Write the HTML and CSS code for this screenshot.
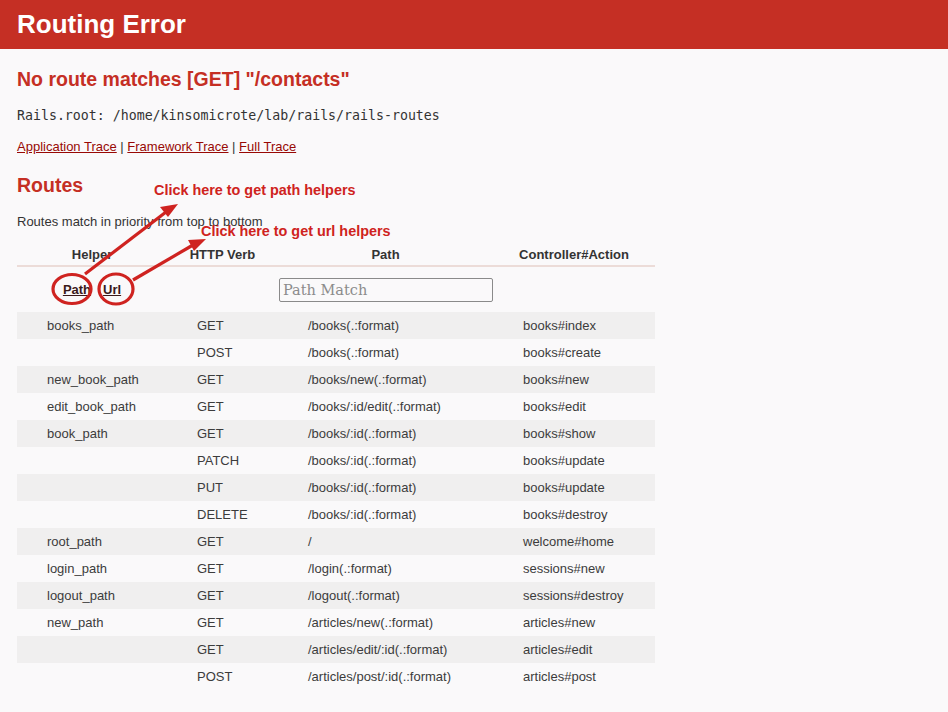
FILE: index.html
```html
<!DOCTYPE html>
<html>
<head>
<meta charset="utf-8">
<title>Routing Error</title>
<link rel="stylesheet" href="styles.css">
</head>
<body>
<header class="topbar"><h1>Routing Error</h1></header>
<main class="content">
  <h2 class="title">No route matches [GET] "/contacts"</h2>
  <p class="root">Rails.root: /home/kinsomicrote/lab/rails/rails-routes</p>
  <p class="traces"><a href="#">Application Trace</a> | <a href="#">Framework Trace</a> | <a href="#">Full Trace</a></p>
  <h2 class="routes-title">Routes</h2>
  <p class="note">Routes match in priority from top to bottom</p>
  <table class="route-table">
    <colgroup><col class="c1"><col class="c2"><col class="c3"><col class="c4"></colgroup>
    <thead>
      <tr class="head">
        <th>Helper</th><th>HTTP Verb</th><th>Path</th><th>Controller#Action</th>
      </tr>
      <tr class="filters">
        <th><span class="helper-links"><a href="#">Path</a><a href="#">Url</a></span></th>
        <th></th>
        <th><input class="search" type="text" placeholder="Path Match"></th>
        <th></th>
      </tr>
    </thead>
    <tbody>
      <tr><td>books_path</td><td>GET</td><td>/books(.:format)</td><td>books#index</td></tr>
      <tr><td></td><td>POST</td><td>/books(.:format)</td><td>books#create</td></tr>
      <tr><td>new_book_path</td><td>GET</td><td>/books/new(.:format)</td><td>books#new</td></tr>
      <tr><td>edit_book_path</td><td>GET</td><td>/books/:id/edit(.:format)</td><td>books#edit</td></tr>
      <tr><td>book_path</td><td>GET</td><td>/books/:id(.:format)</td><td>books#show</td></tr>
      <tr><td></td><td>PATCH</td><td>/books/:id(.:format)</td><td>books#update</td></tr>
      <tr><td></td><td>PUT</td><td>/books/:id(.:format)</td><td>books#update</td></tr>
      <tr><td></td><td>DELETE</td><td>/books/:id(.:format)</td><td>books#destroy</td></tr>
      <tr><td>root_path</td><td>GET</td><td>/</td><td>welcome#home</td></tr>
      <tr><td>login_path</td><td>GET</td><td>/login(.:format)</td><td>sessions#new</td></tr>
      <tr><td>logout_path</td><td>GET</td><td>/logout(.:format)</td><td>sessions#destroy</td></tr>
      <tr><td>new_path</td><td>GET</td><td>/articles/new(.:format)</td><td>articles#new</td></tr>
      <tr><td></td><td>GET</td><td>/articles/edit/:id(.:format)</td><td>articles#edit</td></tr>
      <tr><td></td><td>POST</td><td>/articles/post/:id(.:format)</td><td>articles#post</td></tr>
    </tbody>
  </table>
</main>

<svg class="annotations" width="948" height="712" viewBox="0 0 948 712">
  <ellipse cx="72" cy="289" rx="19" ry="14.5" fill="none" stroke="#cf2320" stroke-width="3.2"/>
  <ellipse cx="116" cy="289" rx="17" ry="15" fill="none" stroke="#cf2320" stroke-width="3.2"/>
  <line x1="85" y1="274" x2="166" y2="212" stroke="#cf2320" stroke-width="3.2"/>
  <polygon points="178,204 160,207 168,217" fill="#cf2320"/>
  <line x1="133" y1="280" x2="193" y2="245" stroke="#cf2320" stroke-width="3.2"/>
  <polygon points="206,239 188,240 194,251" fill="#cf2320"/>
</svg>
<div class="callout callout-path">Click here to get path helpers</div>
<div class="callout callout-url">Click here to get url helpers</div>
</body>
</html>
```

FILE: styles.css
```css
html, body {
  margin: 0;
  padding: 0;
}

body {
  background: #faf9fa;
  color: #333;
  font-family: "Liberation Sans", Arial, sans-serif;
  font-size: 13px;
  position: relative;
  min-height: 712px;
}

.topbar {
  background: #c52f24;
  height: 49px;
  padding: 0 17px;
}

.topbar h1 {
  margin: 0;
  color: #fff;
  font-size: 26px;
  line-height: 49px;
  font-weight: bold;
}

.content {
  padding: 0 17px;
}

.title,
.routes-title {
  color: #c52f24;
  font-size: 19.5px;
  line-height: 24px;
  font-weight: bold;
  margin: 0;
}

.title {
  margin-top: 18px;
}

.root {
  font-family: "DejaVu Sans Mono", monospace;
  font-size: 13.25px;
  line-height: 16px;
  margin: 17px 0 0;
  color: #333;
}

.traces {
  margin: 15px 0 0;
  line-height: 16px;
  color: #333;
}

.traces a {
  color: #980905;
}

.routes-title {
  margin-top: 17.5px;
}

.note {
  margin: 17.5px 0 0;
  line-height: 16px;
}

.route-table {
  border-collapse: collapse;
  table-layout: fixed;
  width: 638px;
  margin: 0;
}

.c1 { width: 150px; }
.c2 { width: 111px; }
.c3 { width: 215px; }
.c4 { width: 162px; }

.route-table .head th {
  padding: 17px 0 3px;
  line-height: 15px;
  font-weight: bold;
  color: #333;
  text-align: center;
}

.route-table .head {
  border-bottom: 2px solid #ecdcd8;
}

.route-table .filters th {
  height: 45px;
  padding: 0;
  vertical-align: middle;
  text-align: left;
}

.helper-links {
  display: flex;
  justify-content: center;
  gap: 12px;
}

.helper-links a {
  color: #3b1a1a;
  font-weight: bold;
}

.search {
  display: block;
  box-sizing: border-box;
  width: 214px;
  height: 24px;
  margin: 0 0 0 1px;
  padding: 0 3px;
  border: 1px solid #8a8a8a;
  border-radius: 2px;
  background: #faf9fa;
  font-family: "DejaVu Serif", serif;
  font-size: 14.5px;
}

.search::placeholder {
  color: #8c8c8c;
}

.route-table td {
  height: 27px;
  padding: 0 0 0 30px;
  line-height: 27px;
  white-space: nowrap;
  color: #3c3c3c;
}

.route-table tbody tr:nth-child(odd) {
  background: #f0efef;
}

.annotations {
  position: absolute;
  top: 0;
  left: 0;
  pointer-events: none;
}

.callout {
  position: absolute;
  color: #cf2320;
  font-weight: bold;
  font-size: 14.4px;
  line-height: 16px;
  white-space: nowrap;
}

.callout-path {
  left: 154px;
  top: 182px;
}

.callout-url {
  left: 201px;
  top: 223px;
}
```
